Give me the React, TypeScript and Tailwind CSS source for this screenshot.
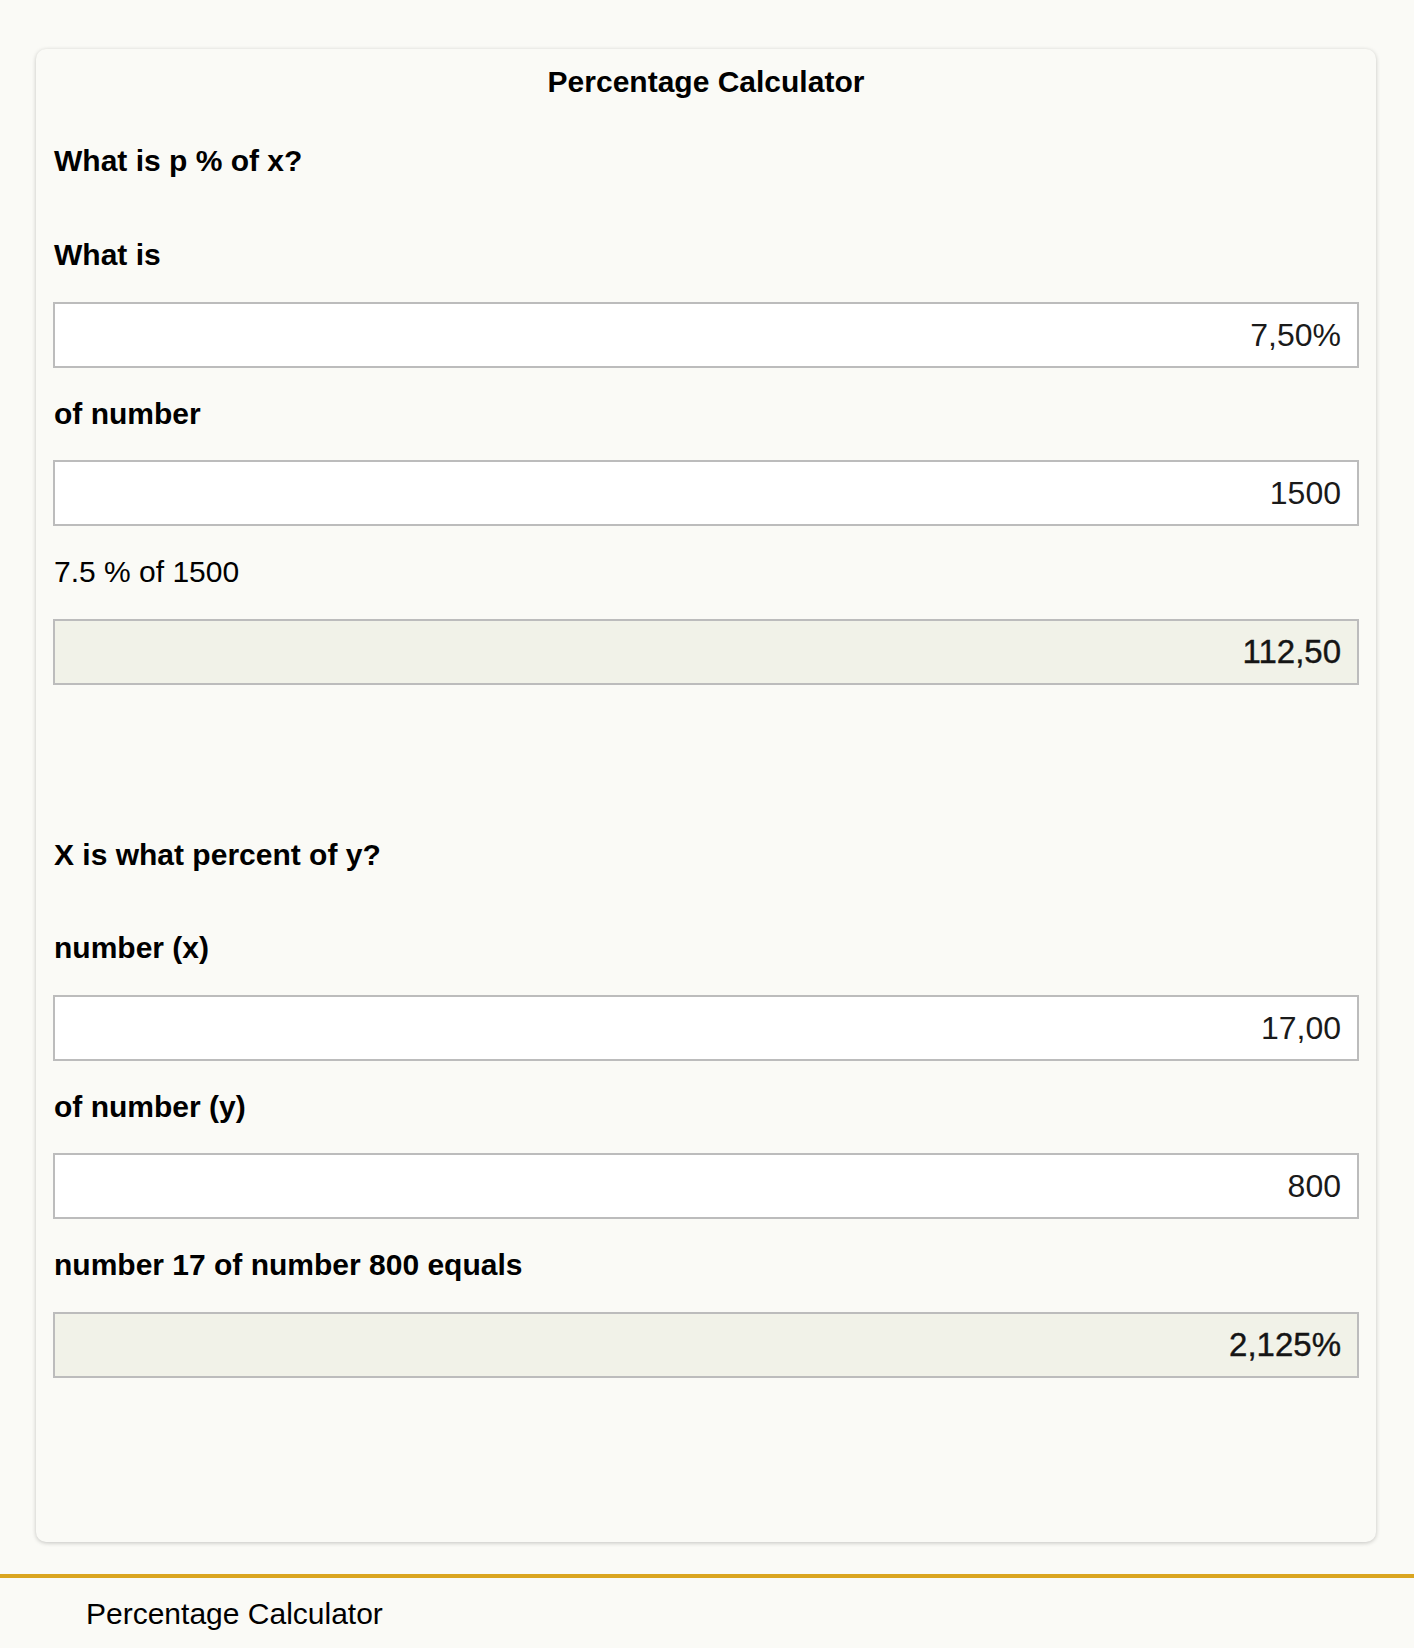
import React from "react";

const Field: React.FC<{ value: string }> = ({ value }) => (
    <input
        type="text"
        readOnly
        value={value}
        className="mt-[24px] block h-[66px] w-full border-2 border-[#bcbcbc] bg-white pr-[16px] text-right text-[32px] text-[#1a1a1a] outline-none"
    />
);

const Result: React.FC<{ value: string }> = ({ value }) => (
    <div className="mt-[25px] flex h-[66px] items-center justify-end border-2 border-[#bcbcbc] bg-[#f1f2e8] pr-[16px] text-[33px] text-[#151515] [-webkit-text-stroke:0.4px_#151515]">
        {value}
    </div>
);

const Label: React.FC<{ children: React.ReactNode; bold?: boolean; className?: string }> = ({
    children,
    bold = true,
    className = "mt-[23px]",
}) => (
    <div className={`${className} text-[30px] leading-[45px] text-black ${bold ? "font-bold" : "font-normal"}`}>
        {children}
    </div>
);

export default function App() {
    return (
        <div className="min-h-[1648px] bg-[#fafaf6] pt-[49px] font-['Liberation_Sans',Arial,sans-serif]">
            <div className="ml-[36px] w-[1340px] rounded-[10px] bg-[#fafaf6] px-[17px] pt-[10px] pb-[164px] shadow-[0_1px_4px_rgba(0,0,0,0.22)]">
                <h1 className="text-center text-[30px] font-bold leading-[45px] text-black">
                    Percentage Calculator
                </h1>

                {/* p % of x */}
                <h2 className="mt-[34px] pl-[1px] text-[30px] font-bold leading-[45px] text-black">
                    What is p % of x?
                </h2>
                <Label className="mt-[49px] pl-[1px]">What is</Label>
                <div className="pt-[1px]">
                    <Field value="7,50%" />
                </div>
                <Label className="mt-[23px] pl-[1px]">of number</Label>
                <Field value="1500" />
                <Label bold={false} className="mt-[23px] pl-[1px]">
                    7.5 % of 1500
                </Label>
                <Result value="112,50" />

                {/* x is what percent of y */}
                <h2 className="mt-[147px] pl-[1px] text-[30px] font-bold leading-[45px] text-black">
                    X is what percent of y?
                </h2>
                <Label className="mt-[48px] pl-[1px]">number (x)</Label>
                <div className="pt-[1px]">
                    <Field value="17,00" />
                </div>
                <Label className="mt-[23px] pl-[1px]">of number (y)</Label>
                <Field value="800" />
                <Label className="mt-[23px] pl-[1px]">number 17 of number 800 equals</Label>
                <Result value="2,125%" />
            </div>

            <footer className="mt-[32px] border-t-4 border-[#daa520] pt-[13px] pb-[20px] pl-[86px]">
                <div className="text-[30px] leading-[45px] text-black">Percentage Calculator</div>
            </footer>
        </div>
    );
}
